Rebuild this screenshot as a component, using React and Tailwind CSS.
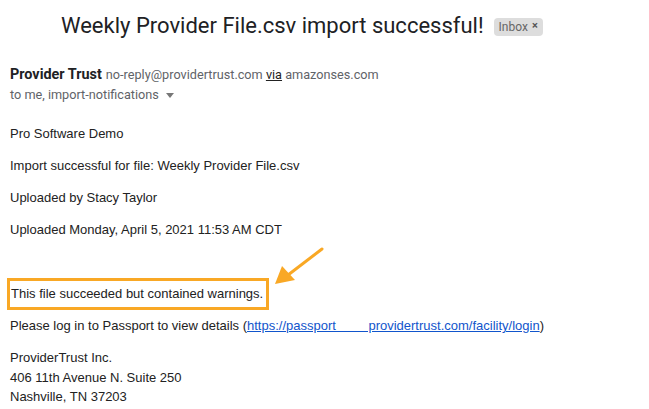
const Line = ({ children, className = '' }) => (
  <p className={`text-[13px] leading-[16px] text-[#222] ${className}`}>{children}</p>
);

export default function App() {
  return (
    <div className="w-[649px] h-[409px] bg-white overflow-hidden relative font-['Liberation_Sans',Arial,sans-serif]">
      {/* Subject */}
      <div className="flex items-center pl-[61px] pt-[8px] h-[44px]">
        <h1 className="font-['Roboto',sans-serif] text-[22px] leading-[28px] text-[#202124] font-normal">
          Weekly Provider File.csv import successful!
        </h1>
        <span className="ml-[10px] mt-[1px] flex items-center gap-[4px] rounded-[4px] bg-[#dddddd] px-[5px] h-[18px] text-[12px] text-[#666] font-['Roboto',sans-serif]">
          Inbox
          <span className="text-[11px] font-bold text-[#555]">×</span>
        </span>
      </div>

      {/* Sender */}
      <div className="pl-[10px] pt-[22px] font-['Roboto',sans-serif]">
        <div className="flex items-baseline gap-[4px] text-[12.7px] leading-[18px] text-[#5f6368]">
          <span className="text-[14.4px] font-bold text-[#202124]">Provider Trust</span>
          <span>no-reply@providertrust.com <span className="underline text-[#222]">via</span> amazonses.com</span>
        </div>
        <div className="flex items-center gap-[7px] mt-[2px] text-[12.7px] leading-[18px] text-[#5f6368]">
          to me, import-notifications
          <svg width="8" height="5" viewBox="0 0 8 5"><path d="M0 0h8L4 5z" fill="#777" /></svg>
        </div>
      </div>

      {/* Body */}
      <div className="pl-[10px] pt-[22px] flex flex-col">
        <Line>Pro Software Demo</Line>
        <Line className="mt-[16px]">Import successful for file: Weekly Provider File.csv</Line>
        <Line className="mt-[16px]">Uploaded by Stacy Taylor</Line>
        <Line className="mt-[16px]">Uploaded Monday, April 5, 2021 11:53 AM CDT</Line>

        <div className="mt-[40px] -ml-[3px] w-fit border-[3px] border-[#f9a825] pl-[1px] pr-[3px] pt-[5px] pb-[5px]">
          <Line>This file succeeded but contained warnings.</Line>
        </div>

        <Line className="mt-[8px]">
          Please log in to Passport to view details (
          <a className="text-[#1155cc] underline">
            https://passport&nbsp;&nbsp;&nbsp;&nbsp;&nbsp;&nbsp;&nbsp;&nbsp;&nbsp;providertrust.com/facility/login
          </a>)
        </Line>

        <Line className="mt-[16px]">ProviderTrust Inc.</Line>
        <Line className="mt-[4px]">406 11th Avenue N. Suite 250</Line>
        <Line className="mt-[3px]">Nashville, TN 37203</Line>
      </div>

      {/* Arrow annotation */}
      <svg className="absolute left-[270px] top-[244px]" width="60" height="46" viewBox="0 0 60 46">
        <line x1="52" y1="5" x2="18" y2="31" stroke="#f9a825" strokeWidth="3" strokeLinecap="round" />
        <path d="M5 40 L12 22 L25 36 Z" fill="#f9a825" />
      </svg>
    </div>
  );
}
